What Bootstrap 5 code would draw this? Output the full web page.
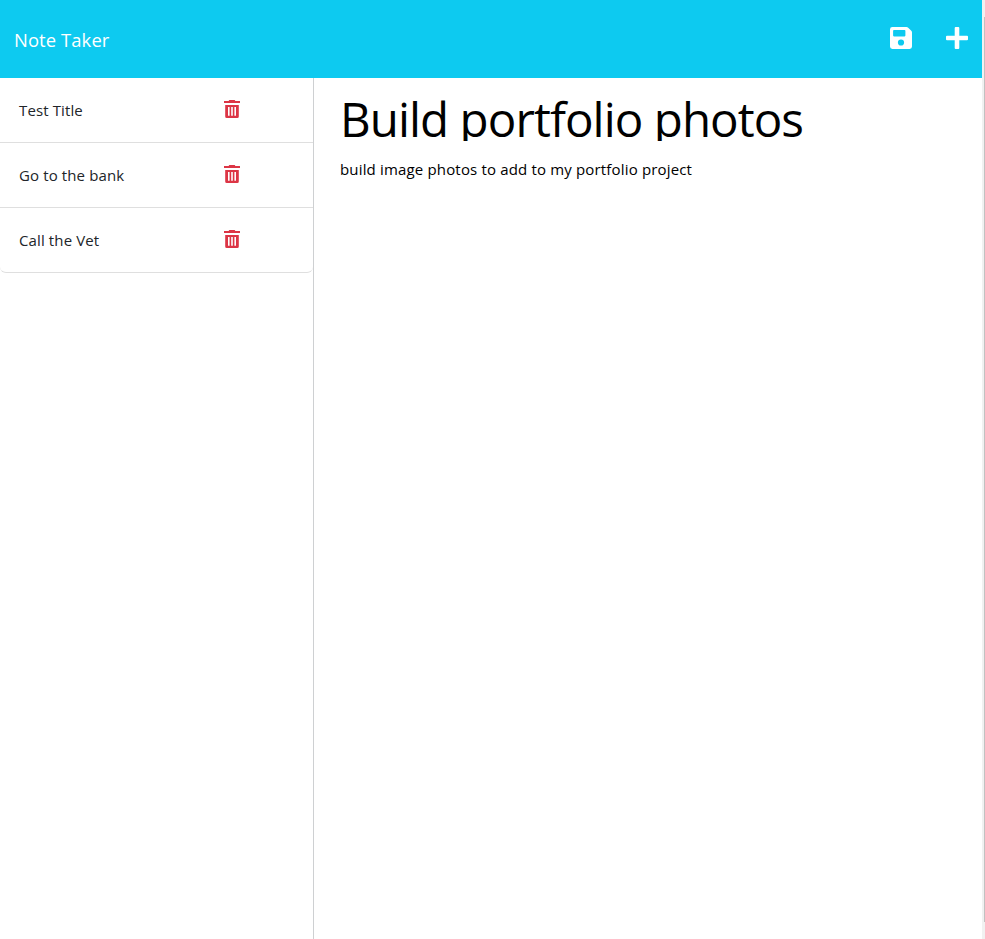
<!DOCTYPE html>
<html lang="en">
<head>
<meta charset="utf-8">
<meta name="viewport" content="width=device-width, initial-scale=1">
<title>Note Taker</title>
<link href="https://cdn.jsdelivr.net/npm/bootstrap@5.3.0/dist/css/bootstrap.min.css" rel="stylesheet">
<style>
body { font-family: "Open Sans", "Noto Sans", sans-serif; height: 939px; }
.page { height: 939px; width: 982px; }
.topbar { height: 78px; background: #0dcaf0; padding: 0 14px 0 14px; }
.topbar .navbar-brand { font-size: 18.4px; letter-spacing: .1px; line-height: 28px; padding: 2px 0 0; }
.topbar svg { display: block; }
.tools { gap: 34px; padding-bottom: 2px; }
.notes { width: 314px; border-right: 1px solid #ced0d2; }
.notes .list-group-item { height: 65px; padding: 0 0 0 19px; border-color: #dfdfdf; border-width: 0 0 1px; color: #212529; font-size: 15px; }
.notes .list-group { --bs-list-group-border-radius: 6px; }
.note-name { width: 205px; letter-spacing: .12px; }
.trash { color: #dc3545; padding-bottom: 3px; }
.trash svg { display: block; }
.editor { padding: 17px 0 0 26px; color: #000; }
.note-heading { height: 46px; overflow: hidden; font-size: 47.5px; font-weight: 400; line-height: 48px; letter-spacing: -.93px; margin: 0; white-space: nowrap; }
.note-body { font-size: 15px; line-height: 24px; letter-spacing: .165px; margin: 16px 0 0; white-space: nowrap; }
.track { width: 3px; height: 939px; background: #f1f1f1; padding: 17px 0 0 2px; }
.thumb { height: 905px; background: #c1c1c1; }
</style>
<script src="https://cdn.jsdelivr.net/npm/bootstrap@5.3.0/dist/js/bootstrap.bundle.min.js"></script>
</head>
<body class="d-flex bg-white overflow-hidden">
<svg class="d-none" xmlns="http://www.w3.org/2000/svg">
  <symbol id="trash" viewBox="0 0 16 18"><path fill="currentColor" fill-rule="evenodd" d="M0 1h4.600L5.300 0h5.400l.7 1H16v2H0zM1.200 5h13.600v11.500q0 1.500-1.500 1.500H2.700q-1.500 0-1.500-1.500zM4 7v8.800h1.600V7zM7.200 7v8.800h1.600V7zM10.400 7v8.800H12V7z"/></symbol>
</svg>
<div class="page d-flex flex-column">
  <nav class="topbar navbar navbar-dark justify-content-between flex-nowrap">
    <a class="navbar-brand m-0 text-white" href="#">Note Taker</a>
    <div class="tools d-flex align-items-center text-white">
      <svg width="22" height="22" viewBox="0 0 22 22" role="img" aria-label="Save"><path fill="currentColor" fill-rule="evenodd" d="M2.400 0h14.100q1 0 1.700.7l3.100 3.100q.7.7.7 1.700v14.100q0 2.400-2.400 2.400H2.400Q0 22 0 19.600V2.400Q0 0 2.400 0zM3.900 3.100q-.8 0-.8.8v4.700q0 .8.8.8h10.700q.8 0 .8-.8V3.900q0-.8-.8-.8zM11 12.400a3.100 3.100 0 1 0 0 6.200a3.100 3.100 0 0 0 0-6.200z"/></svg>
      <svg width="22" height="22" viewBox="0 0 22 22" role="img" aria-label="New note"><path fill="currentColor" d="M9.700 0h2.600q1 0 1 1v7.700H21q1 0 1 1v2.600q0 1-1 1h-7.700V21q0 1-1 1H9.700q-1 0-1-1v-7.700H1q-1 0-1-1V9.700q0-1 1-1h7.700V1q0-1 1-1z"/></svg>
    </div>
  </nav>
  <div class="d-flex flex-grow-1">
    <aside class="notes flex-shrink-0">
      <ul class="list-group">
        <li class="list-group-item d-flex align-items-center"><span class="note-name">Test Title</span><span class="trash"><svg width="16" height="18"><use href="#trash"/></svg></span></li>
        <li class="list-group-item d-flex align-items-center"><span class="note-name">Go to the bank</span><span class="trash"><svg width="16" height="18"><use href="#trash"/></svg></span></li>
        <li class="list-group-item d-flex align-items-center"><span class="note-name">Call the Vet</span><span class="trash"><svg width="16" height="18"><use href="#trash"/></svg></span></li>
      </ul>
    </aside>
    <main class="editor flex-grow-1">
      <h1 class="note-heading">Build portfolio photos</h1>
      <p class="note-body">build image photos to add to my portfolio project</p>
    </main>
  </div>
</div>
<div class="track flex-shrink-0"><div class="thumb"></div></div>
</body>
</html>
